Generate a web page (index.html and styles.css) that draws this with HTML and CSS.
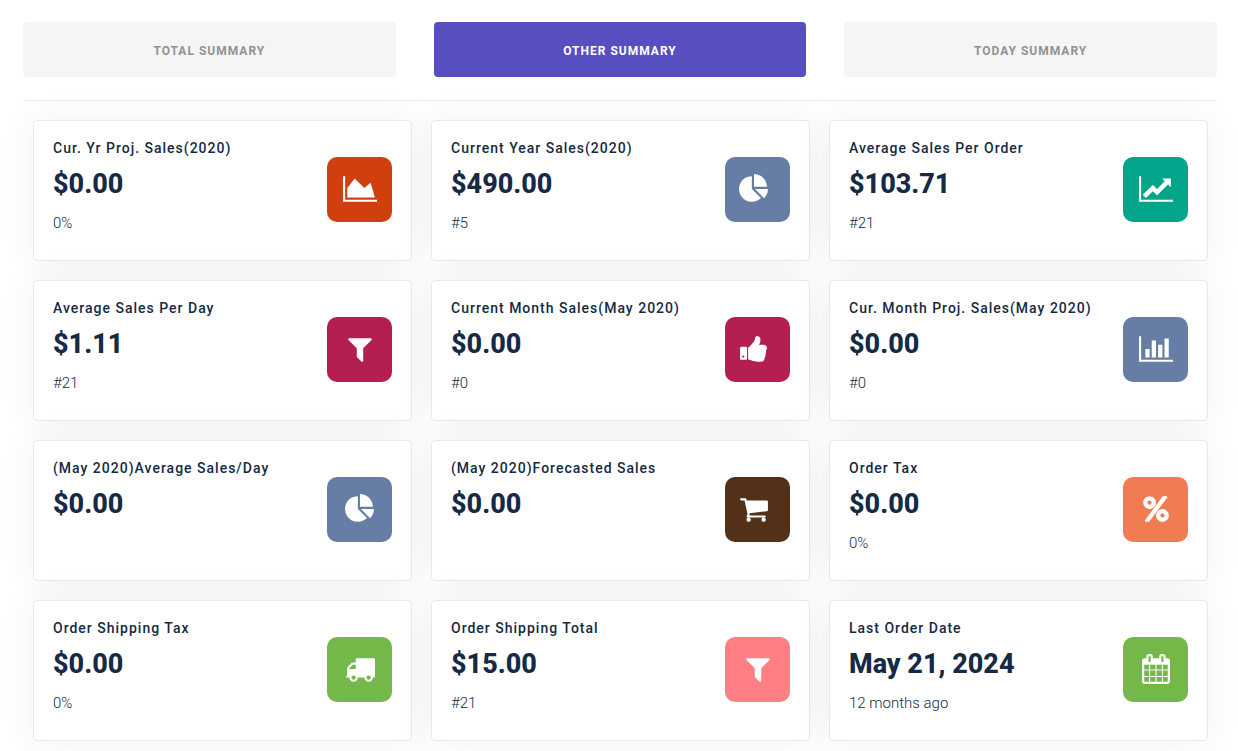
FILE: index.html
```html
<!DOCTYPE html>
<html lang="en">
<head>
<meta charset="UTF-8">
<meta name="viewport" content="width=device-width, initial-scale=1">
<title>Sales Summary</title>

<link rel="stylesheet" href="styles.css">
</head>
<body>

<!-- icon shapes, used by the cards below -->
<svg class="sprite" aria-hidden="true">
	<symbol id="area" viewBox="0 0 2048 1792"><path d="M2048 1536v128h-2048v-1536h128v1408h1920zm-384-1024l256 896h-1664v-576l448-576 576 576z"/></symbol>
	<symbol id="pie" viewBox="0 0 1792 1792"><path d="M768 890l546 546q-106 108-247.5 168t-298.5 60q-209 0-385.5-103t-279.5-279.5-103-385.5 103-385.5 279.5-279.5 385.5-103v762zm187 6h773q0 157-60 298.5t-168 247.5zm709-128h-768v-768q209 0 385.5 103t279.5 279.5 103 385.5z"/></symbol>
	<symbol id="line" viewBox="0 0 2048 1792"><path d="M2048 1536v128h-2048v-1536h128v1408h1920zm-128-1248v435q0 21-19.5 29.5t-35.5-7.5l-121-121-633 633q-10 10-23 10t-23-10l-233-233-416 416-192-192 585-585q10-10 23-10t23 10l233 233 464-464-121-121q-16-16-7.5-35.5t29.5-19.5h435q14 0 23 9t9 23z"/></symbol>
	<symbol id="filter" viewBox="0 0 1792 1792"><path d="M1595 295q17 41-14 70l-493 493v742q0 42-39 59-13 5-25 5-27 0-45-19l-256-256q-19-19-19-45v-486l-493-493q-31-29-14-70 17-39 59-39h1280q42 0 59 39z"/></symbol>
	<symbol id="thumb" viewBox="0 0 1792 1792"><path d="M320 1344q0-26-19-45t-45-19q-27 0-45.5 19t-18.5 45q0 27 18.5 45.5t45.5 18.5q26 0 45-18.5t19-45.5zm160-512v640q0 26-19 45t-45 19h-288q-26 0-45-19t-19-45v-640q0-26 19-45t45-19h288q26 0 45 19t19 45zm1184 0q0 86-55 149 15 44 15 76 3 76-43 137 17 56 0 117-15 57-54 94 9 112-49 181-64 76-197 78h-129q-66 0-144-15.5t-121.5-29-120.5-39.5q-123-43-158-44-26-1-45-19.5t-19-44.5v-641q0-25 18-43.5t43-20.5q24-2 76-59t101-121q68-87 101-120 18-18 31-48t17.5-48.5 13.5-60.5q7-39 12.5-61t19.5-52 34-50q19-19 45-19 46 0 82.5 10.5t60 26 40 40.5 24 45 12 50 5 45 .5 39q0 38-9.5 76t-19 60-27.5 56q-3 6-10 18t-11 22-8 24h277q78 0 135 57t57 135z"/></symbol>
	<symbol id="bars" viewBox="0 0 2048 1792"><path d="M640 896v512h-256v-512h256zm384-512v1024h-256v-1024h256zm1024 1152v128h-2048v-1536h128v1408h1920zm-640-896v768h-256v-768h256zm384-384v1152h-256v-1152h256z"/></symbol>
	<symbol id="cart" viewBox="0 0 1792 1792"><path d="M704 1536q0 52-38 90t-90 38-90-38-38-90 38-90 90-38 90 38 38 90zm896 0q0 52-38 90t-90 38-90-38-38-90 38-90 90-38 90 38 38 90zm128-1088v512q0 24-16.5 42.5t-40.5 21.5l-1044 122q13 60 13 70 0 16-24 64h920q26 0 45 19t19 45-19 45-45 19h-1024q-26 0-45-19t-19-45q0-11 8-31.5t16-36 21.5-40 15.5-29.5l-177-823h-204q-26 0-45-19t-19-45 19-45 45-19h256q16 0 28.5 6.5t19.5 15.5 13 24.5 8 26 5.5 29.5 4.5 26h1201q26 0 45 19t19 45z"/></symbol>
	<symbol id="percent" viewBox="0 0 1792 1792"><path d="M1408 1280q0-52-38-90t-90-38-90 38-38 90 38 90 90 38 90-38 38-90zm-768-768q0-52-38-90t-90-38-90 38-38 90 38 90 90 38 90-38 38-90zm1024 768q0 159-112.5 271.5t-271.5 112.5-271.5-112.5-112.5-271.5 112.5-271.5 271.5-112.5 271.5 112.5 112.5 271.5zm-96-1088q0 20-13 38l-1056 1408q-19 26-51 26h-160q-26 0-45-19t-19-45q0-20 13-38l1056-1408q19-26 51-26h160q26 0 45 19t19 45zm-672 320q0 159-112.5 271.5t-271.5 112.5-271.5-112.5-112.5-271.5 112.5-271.5 271.5-112.5 271.5 112.5 112.5 271.5z"/></symbol>
	<symbol id="truck" viewBox="0 0 1792 1792"><path d="M640 1408q0-52-38-90t-90-38-90 38-38 90 38 90 90 38 90-38 38-90zm-384-512h384v-256h-158q-13 0-22 9l-195 195q-9 9-9 22v30zm1280 512q0-52-38-90t-90-38-90 38-38 90 38 90 90 38 90-38 38-90zm256-1088v1024q0 15-4 26.5t-13.5 18.5-16.5 11.5-23.5 6-22.5 2-25.5 0-22.5-.5q0 106-75 181t-181 75-181-75-75-181h-384q0 106-75 181t-181 75-181-75-75-181h-64q-3 0-22.5.5t-25.5 0-22.5-2-23.5-6-16.5-11.5-13.5-18.5-4-26.5q0-26 19-45t45-19v-320q0-8-.5-35t0-38 2.5-34.5 6.5-37 14-30.5 22.5-30l198-198q19-19 50.5-32t58.5-13h160v-192q0-26 19-45t45-19h1024q26 0 45 19t19 45z"/></symbol>
	<symbol id="calendar" viewBox="0 0 1792 1792"><path d="M192 1664h288v-288h-288v288zm352 0h320v-288h-320v288zm-352-352h288v-320h-288v320zm352 0h320v-320h-320v320zm-352-384h288v-288h-288v288zm736 736h320v-288h-320v288zm-384-736h320v-288h-320v288zm768 736h288v-288h-288v288zm-384-352h320v-320h-320v320zm-352-864v-288q0-13-9.5-22.5t-22.5-9.5h-64q-13 0-22.5 9.5t-9.5 22.5v288q0 13 9.5 22.5t22.5 9.5h64q13 0 22.5-9.5t9.5-22.5zm736 864h288v-320h-288v320zm-384-384h320v-288h-320v288zm384 0h288v-288h-288v288zm32-480v-288q0-13-9.5-22.5t-22.5-9.5h-64q-13 0-22.5 9.5t-9.5 22.5v288q0 13 9.5 22.5t22.5 9.5h64q13 0 22.5-9.5t9.5-22.5zm384-64v1280q0 52-38 90t-90 38h-1408q-52 0-90-38t-38-90v-1280q0-52 38-90t90-38h128v-96q0-66 47-113t113-47h64q66 0 113 47t47 113v96h384v-96q0-66 47-113t113-47h64q66 0 113 47t47 113v96h128q52 0 90 38t38 90z"/></symbol>
</svg>

<div class="summary">
	<div class="tabs">
		<button type="button" class="tab">TOTAL SUMMARY</button>
		<button type="button" class="tab active">OTHER SUMMARY</button>
		<button type="button" class="tab">TODAY SUMMARY</button>
	</div>

	<div class="cards">
		<div class="card">
			<div class="info">
				<h2 class="title">Cur. Yr Proj. Sales(2020)</h2>
				<p class="value">$0.00</p>
				<p class="note">0%</p>
			</div>
			<div class="icon red"><svg class="wide"><use href="#area"/></svg></div>
		</div>
		<div class="card">
			<div class="info">
				<h2 class="title">Current Year Sales(2020)</h2>
				<p class="value">$490.00</p>
				<p class="note">#5</p>
			</div>
			<div class="icon blue left"><svg><use href="#pie"/></svg></div>
		</div>
		<div class="card">
			<div class="info">
				<h2 class="title">Average Sales Per Order</h2>
				<p class="value">$103.71</p>
				<p class="note">#21</p>
			</div>
			<div class="icon teal"><svg class="wide"><use href="#line"/></svg></div>
		</div>

		<div class="card">
			<div class="info">
				<h2 class="title">Average Sales Per Day</h2>
				<p class="value">$1.11</p>
				<p class="note">#21</p>
			</div>
			<div class="icon crimson"><svg><use href="#filter"/></svg></div>
		</div>
		<div class="card">
			<div class="info">
				<h2 class="title">Current Month Sales(May 2020)</h2>
				<p class="value">$0.00</p>
				<p class="note">#0</p>
			</div>
			<div class="icon crimson left"><svg><use href="#thumb"/></svg></div>
		</div>
		<div class="card">
			<div class="info">
				<h2 class="title">Cur. Month Proj. Sales(May 2020)</h2>
				<p class="value">$0.00</p>
				<p class="note">#0</p>
			</div>
			<div class="icon blue"><svg class="wide"><use href="#bars"/></svg></div>
		</div>

		<div class="card">
			<div class="info">
				<h2 class="title">(May 2020)Average Sales/Day</h2>
				<p class="value">$0.00</p>
			</div>
			<div class="icon blue"><svg><use href="#pie"/></svg></div>
		</div>
		<div class="card">
			<div class="info">
				<h2 class="title">(May 2020)Forecasted Sales</h2>
				<p class="value">$0.00</p>
			</div>
			<div class="icon brown left"><svg><use href="#cart"/></svg></div>
		</div>
		<div class="card">
			<div class="info">
				<h2 class="title">Order Tax</h2>
				<p class="value">$0.00</p>
				<p class="note">0%</p>
			</div>
			<div class="icon orange"><svg><use href="#percent"/></svg></div>
		</div>

		<div class="card">
			<div class="info">
				<h2 class="title">Order Shipping Tax</h2>
				<p class="value">$0.00</p>
				<p class="note">0%</p>
			</div>
			<div class="icon green"><svg><use href="#truck"/></svg></div>
		</div>
		<div class="card">
			<div class="info">
				<h2 class="title">Order Shipping Total</h2>
				<p class="value">$15.00</p>
				<p class="note">#21</p>
			</div>
			<div class="icon pink"><svg><use href="#filter"/></svg></div>
		</div>
		<div class="card">
			<div class="info">
				<h2 class="title">Last Order Date</h2>
				<p class="value">May 21, 2024</p>
				<p class="note">12 months ago</p>
			</div>
			<div class="icon green"><svg><use href="#calendar"/></svg></div>
		</div>
	</div>
</div>

</body>
</html>
```
FILE: styles.css
```css
* { box-sizing: border-box; }

body {
	margin: 0;
	background-color: #fff;
	color: #142a45;
	font-family: Roboto, "Liberation Sans", sans-serif;
}

.sprite { display: none; }

.summary { padding: 22px 21px 10px 23px; }

/* tabs */
.tabs {
	display: grid;
	grid-template-columns: repeat(3, 1fr);
	gap: 38px;
	padding-bottom: 23px;
	border-bottom: 1px solid #e9ebee;
}

.tab {
	padding: 20px 10px 16px;
	border: 0;
	border-radius: 4px;
	background-color: #f5f5f5;
	color: #929292;
	font-family: inherit;
	font-size: 12px;
	font-weight: 700;
	line-height: 19px;
	letter-spacing: 1px;
	cursor: pointer;
}

.tab.active {
	background-color: #574fc0;
	color: #fff;
}

/* cards */
.cards {
	display: grid;
	grid-template-columns: repeat(3, 1fr);
	gap: 19px;
	padding: 19px 9px 0 10px;
}

.card {
	display: flex;
	align-items: center;
	justify-content: space-between;
	min-height: 141px;
	padding: 17px 19px 19px;
	border: 1px solid #e6e9ee;
	border-radius: 4px;
	background-color: #fff;
	box-shadow: 0 0 36px rgba(40, 60, 110, .07);
}

.info { align-self: flex-start; }

.title {
	margin: 0;
	font-size: 14px;
	font-weight: 500;
	line-height: 20px;
	letter-spacing: 1px;
}

.value {
	margin: 10px 0 0;
	font-size: 27px;
	font-weight: 800;
	line-height: 32px;
}

.note {
	margin: 13px 0 0;
	font-size: 15px;
	font-weight: 300;
	line-height: 20px;
}

.icon {
	display: flex;
	flex-shrink: 0;
	align-items: center;
	justify-content: center;
	width: 65px;
	height: 65px;
	padding-bottom: 2px;
	border-radius: 10px;
}

.icon.left {
	justify-content: flex-start;
	padding-left: 14px;
}

.icon svg {
	width: 30px;
	height: 30px;
	fill: #fff;
}

.icon svg.wide { width: 34px; }

.red { background-color: #d03f0e; }
.blue { background-color: #667ea5; }
.teal { background-color: #04a58a; }
.crimson { background-color: #b41e50; }
.brown { background-color: #533018; }
.orange { background-color: #f27c52; }
.green { background-color: #73b848; }
.pink { background-color: #ff8084; }
```
